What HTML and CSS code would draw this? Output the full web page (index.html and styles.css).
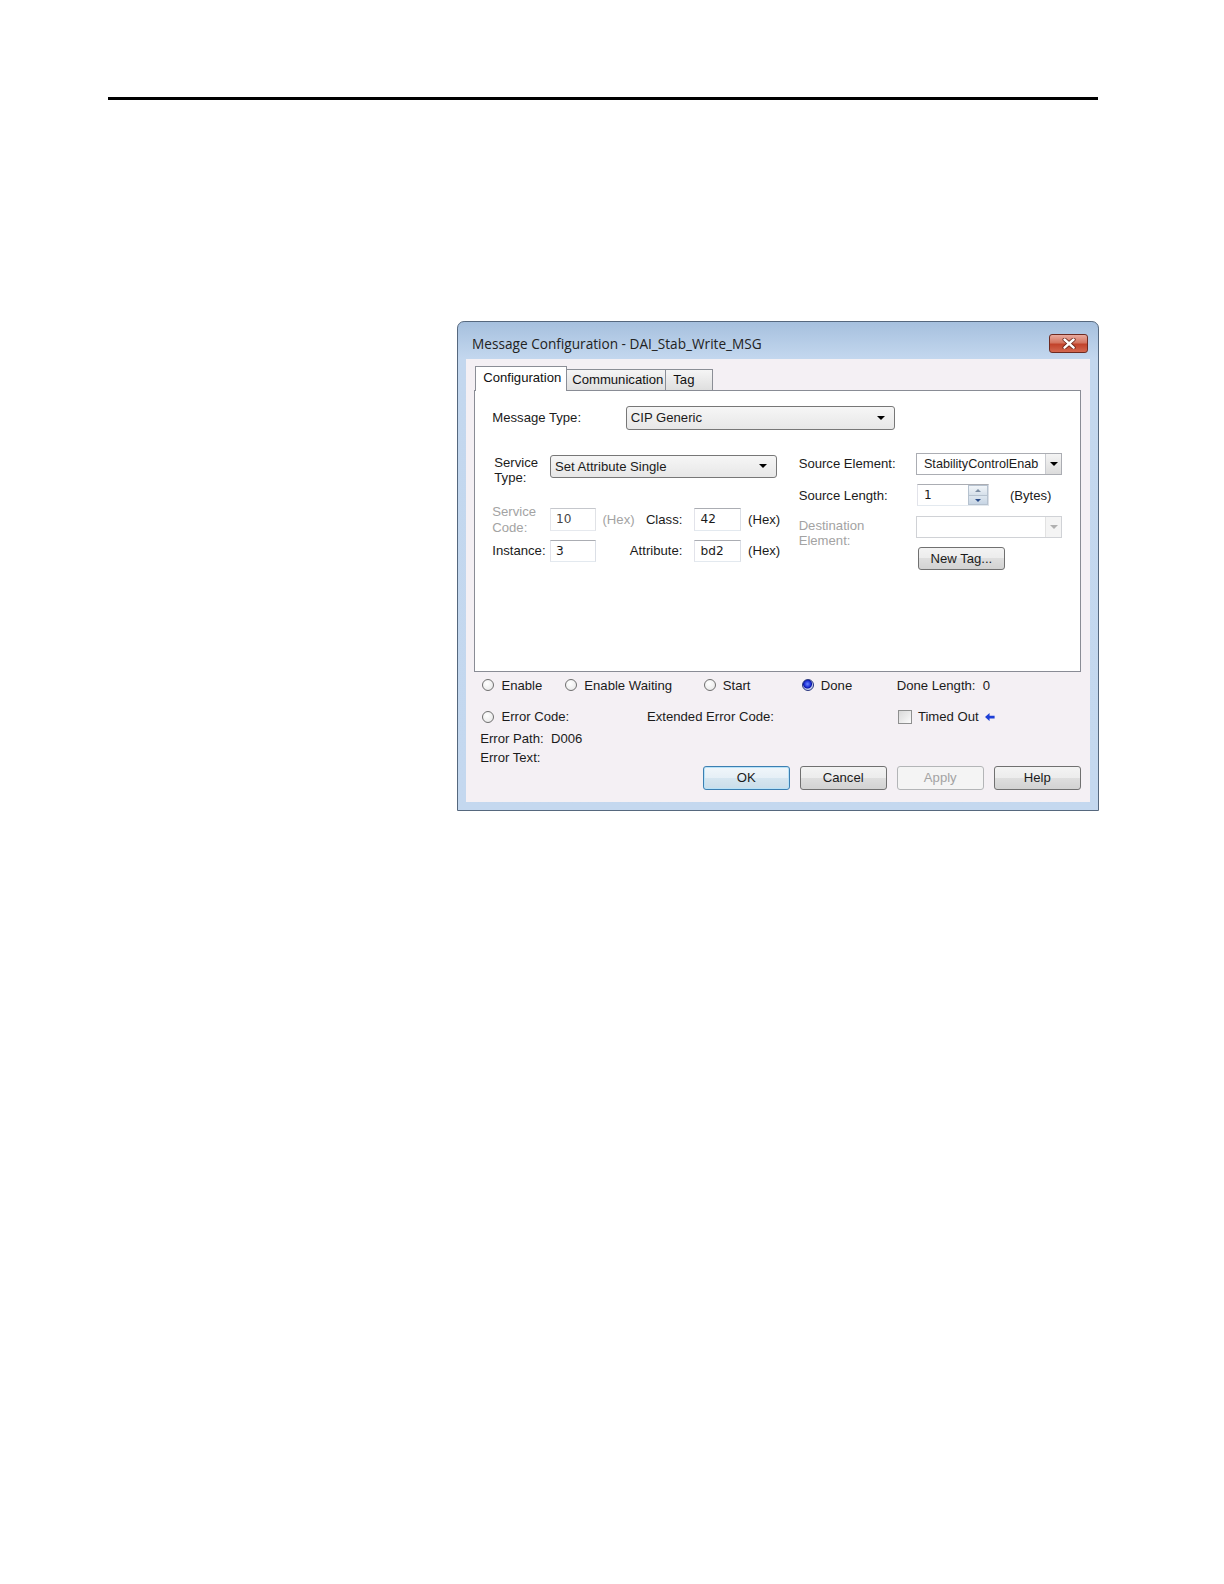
FILE: index.html
```html
<!DOCTYPE html>
<html lang="en">
  <head>
    <meta charset="UTF-8" />
    <title>Message Configuration - DAI_Stab_Write_MSG</title>
    <link rel="stylesheet" href="styles.css">
  </head>
  <body>
    <div class="page">
      <hr class="rule">

      <div class="dialog">
        <div class="titlebar">
          <span class="title">Message Configuration - DAI_Stab_Write_MSG</span>
          <span class="close">
            <svg width="14" height="11" viewBox="0 0 14 11">
              <path d="M2.5 1.5 L11.5 9.5 M11.5 1.5 L2.5 9.5" stroke="#6b2418" stroke-width="4" stroke-linecap="round" />
              <path d="M2.5 1.5 L11.5 9.5 M11.5 1.5 L2.5 9.5" stroke="#fff" stroke-width="2.4" stroke-linecap="round" />
            </svg>
          </span>
        </div>

        <div class="client">
          <div class="tabs">
            <span class="tab tab-config active">Configuration</span>
            <span class="tab tab-comm">Communication</span>
            <span class="tab tab-tag">Tag</span>
          </div>

          <div class="panel">
            <div class="msg-row">
              <span class="msg-label">Message Type:</span>
              <div class="combo msg-combo"><span>CIP Generic</span><i class="arrow"></i></div>
            </div>

            <div class="cols">
              <div class="left">
                <div class="svc-row">
                  <span class="svc-label">Service<br>Type:</span>
                  <div class="combo svc-combo"><span>Set Attribute Single</span><i class="arrow"></i></div>
                </div>

                <div class="codes">
                  <span class="two-line gray">Service<br>Code:</span>
                  <div class="field disabled">10</div>
                  <div class="mid"><span class="gray">(Hex)</span><span>Class:</span></div>
                  <div class="field">42</div>
                  <span class="hex">(Hex)</span>

                  <span>Instance:</span>
                  <div class="field">3</div>
                  <div class="mid"><span></span><span>Attribute:</span></div>
                  <div class="field">bd2</div>
                  <span class="hex">(Hex)</span>
                </div>
              </div>

              <div class="right">
                <span>Source Element:</span>
                <div class="ecombo">
                  <span class="ecombo-text">StabilityControlEnab</span>
                  <span class="ecombo-btn"><i class="arrow"></i></span>
                </div>

                <span>Source Length:</span>
                <div class="len">
                  <div class="spin">
                    <span class="spin-text">1</span>
                    <span class="spin-btns">
                      <span class="spin-up"><i class="tri-up"></i></span>
                      <span class="spin-down"><i class="tri-down"></i></span>
                    </span>
                  </div>
                  <span class="bytes">(Bytes)</span>
                </div>

                <span class="two-line gray dest-label">Destination<br>Element:</span>
                <div class="ecombo off">
                  <span class="ecombo-text"></span>
                  <span class="ecombo-btn"><i class="arrow"></i></span>
                </div>

                <span></span>
                <div class="btn newtag">New Tag...</div>
              </div>
            </div>
          </div>

          <div class="status">
            <div class="srow">
              <span class="item w-enable"><i class="radio"></i>Enable</span>
              <span class="item w-waiting"><i class="radio"></i>Enable Waiting</span>
              <span class="item w-start"><i class="radio"></i>Start</span>
              <span class="item w-done"><i class="radio on"></i>Done</span>
              <span class="item">Done Length:&nbsp; 0</span>
            </div>
            <div class="srow srow-2">
              <span class="item w-error"><i class="radio"></i>Error Code:</span>
              <span class="item w-ext">Extended Error Code:</span>
              <span class="item timed"><i class="check"></i>Timed Out
                <svg class="back" width="10" height="8" viewBox="0 0 10 8">
                  <path d="M0 4 L4.5 0 L4.5 2.6 L9.5 2.6 L9.5 5.4 L4.5 5.4 L4.5 8 Z" fill="#1d3fd6" />
                </svg>
              </span>
            </div>
            <div class="eline eline-first">Error Path:&nbsp; D006</div>
            <div class="eline">Error Text:</div>
          </div>

          <div class="buttons">
            <div class="btn default">OK</div>
            <div class="btn">Cancel</div>
            <div class="btn disabled">Apply</div>
            <div class="btn">Help</div>
          </div>
        </div>
      </div>
    </div>
  </body>
</html>
```

FILE: styles.css
```css
html,
body {
  overflow: hidden;
}

body {
  margin: 0;
  background: #fff;
  font-family: "Liberation Sans", Arial, sans-serif;
  font-size: 13px;
  color: #1b1b1b;
}

.page {
  zoom: 1.011;
  width: 1224px;
  height: 1584px;
  padding-top: 96px;
  box-sizing: border-box;
}

.rule {
  margin: 0 0 0 107px;
  width: 979px;
  height: 3px;
  border: 0;
  background: #000;
}

/* window frame */
.dialog {
  box-sizing: border-box;
  width: 635px;
  margin: 219px 0 0 452px;
  padding: 0 8px 8px;
  border: 1px solid #56687e;
  border-radius: 7px 7px 0 0;
  background: linear-gradient(to bottom, #a6c0de 0, #c3d7ee 36px, #c4d8ef 100%);
}

.titlebar {
  box-sizing: border-box;
  height: 36px;
  padding: 6px 0 0 6px;
  display: flex;
  align-items: center;
  justify-content: space-between;
}

.title {
  font-family: "Open Sans", "Noto Sans", sans-serif;
  font-size: 13.5px;
  color: #222;
}

.close {
  box-sizing: border-box;
  width: 38px;
  height: 19px;
  margin-right: 2px;
  display: flex;
  align-items: center;
  justify-content: center;
  border: 1px solid #6e2a20;
  border-radius: 3px;
  background: linear-gradient(to bottom, #e9aa9e 0, #d47560 45%, #c2432b 55%, #d3674f 100%);
}

.client {
  padding: 7px 9px 11px 8px;
  background: #f4f0f4;
}

/* tabs */
.tabs {
  display: flex;
  align-items: flex-end;
  height: 24px;
  padding-left: 1px;
}

.tab {
  box-sizing: border-box;
  height: 21px;
  line-height: 20px;
  border: 1px solid #8b8e96;
  border-bottom: 0;
  background: linear-gradient(to bottom, #f5f5f5, #dfdfdf);
  color: #111;
}

.tab-config { width: 91px; padding-left: 7px; }
.tab-comm { width: 99px; padding-left: 5px; margin-left: -1px; }
.tab-tag { width: 47px; padding-left: 7px; margin-left: -1px; }

.tab.active {
  position: relative;
  z-index: 1;
  height: 25px;
  line-height: 22px;
  margin-bottom: -1px;
  background: #fff;
}

.panel {
  box-sizing: border-box;
  height: 279px;
  padding: 15px 0 0 17px;
  border: 1px solid #898c95;
  background: #fff;
}

.gray {
  color: #a3a3a3;
}

/* combo boxes */
.combo {
  box-sizing: border-box;
  height: 23px;
  padding: 0 9px 0 4px;
  display: flex;
  align-items: center;
  justify-content: space-between;
  border: 1px solid #777;
  border-radius: 3px;
  background: linear-gradient(to bottom, #f6f6f6, #e7e7e7);
}

.arrow {
  width: 0;
  height: 0;
  border-top: 4px solid #000;
  border-left: 4px solid transparent;
  border-right: 4px solid transparent;
}

.msg-row {
  display: flex;
  align-items: center;
}

.msg-label {
  width: 132px;
}

.msg-combo {
  width: 266px;
}

.cols {
  display: flex;
  margin-top: 23px;
}

.left {
  flex: 0 0 303px;
  padding-top: 2px;
}

.svc-row {
  display: flex;
  align-items: flex-start;
}

.svc-label {
  box-sizing: border-box;
  width: 57px;
  padding-left: 2px;
  line-height: 15px;
}

.svc-combo {
  width: 225px;
}

.codes {
  display: grid;
  grid-template-columns: 57px 46px 97px 46px auto;
  row-gap: 5px;
  align-items: center;
  margin-top: 19px;
}

.two-line {
  line-height: 15px;
}

.mid {
  display: flex;
  justify-content: space-between;
  padding: 0 12px 0 6px;
}

.hex {
  padding-left: 7px;
}

/* text boxes */
.field {
  box-sizing: border-box;
  height: 22px;
  padding-left: 5px;
  line-height: 21px;
  border: 1px solid;
  border-color: #abadb3 #dbdfe6 #e3e9ef #e2e3ea;
  background: #fff;
  font-family: "DejaVu Sans", sans-serif;
  font-size: 12px;
}

.field.disabled {
  border-color: #c5c7cc #e0e2e6 #e6e9ee #e4e5ea;
  color: #444;
}

.right {
  flex: 1;
  min-width: 0;
  display: grid;
  grid-template-columns: 116px 145px;
  grid-template-rows: 22px 22px 22px 23px;
  row-gap: 9px;
  align-items: center;
}

.dest-label {
  align-self: start;
  padding-top: 2px;
}

.ecombo {
  box-sizing: border-box;
  height: 22px;
  display: flex;
  border: 1px solid #abadb3;
  background: #fff;
}

.ecombo-text {
  flex: 1;
  padding-left: 7px;
  line-height: 20px;
  font-size: 12.5px;
}

.ecombo-btn {
  width: 15px;
  display: flex;
  align-items: center;
  justify-content: center;
  border-left: 1px solid #c9cbd0;
  background: linear-gradient(to bottom, #f4f4f4, #dcdcdc);
}

.ecombo.off {
  border-color: #d0d2d6;
}

.ecombo.off .ecombo-btn {
  background: #f4f4f4;
  border-left-color: #e2e2e2;
}

.ecombo.off .arrow {
  border-top-color: #b0b0b0;
}

.len {
  display: flex;
  align-items: center;
  white-space: nowrap;
}

.spin {
  box-sizing: border-box;
  flex: 0 0 71px;
  height: 22px;
  margin-left: 1px;
  display: flex;
  border: 1px solid;
  border-color: #abadb3 #dbdfe6 #e3e9ef #e2e3ea;
  background: #fff;
}

.spin-text {
  flex: 1;
  padding-left: 6px;
  line-height: 21px;
  font-family: "DejaVu Sans", sans-serif;
  font-size: 12px;
}

.spin-btns {
  width: 19px;
  display: flex;
  flex-direction: column;
}

.spin-up,
.spin-down {
  flex: 1;
  display: flex;
  align-items: center;
  justify-content: center;
  border: 1px solid #b6c2cf;
  background: linear-gradient(to bottom, #f1f5f9, #d6e0ea);
}

.spin-down {
  border-top: 0;
  background: linear-gradient(to bottom, #dde6ef, #c7d5e4);
}

.tri-up {
  border-bottom: 3px solid #7d8ea3;
  border-left: 3px solid transparent;
  border-right: 3px solid transparent;
}

.tri-down {
  border-top: 3px solid #2a4d8a;
  border-left: 3px solid transparent;
  border-right: 3px solid transparent;
}

.bytes {
  padding-left: 21px;
}

/* buttons */
.btn {
  box-sizing: border-box;
  width: 86px;
  height: 24px;
  line-height: 22px;
  text-align: center;
  border: 1px solid #707070;
  border-radius: 3px;
  background: linear-gradient(to bottom, #f3f3f3 0, #ececec 50%, #dedede 50%, #d2d2d2 100%);
}

.newtag {
  height: 23px;
  margin-left: 2px;
  line-height: 21px;
}

.btn.default {
  border-color: #3c7fb1;
  box-shadow: inset 0 0 0 1px #b8e2f8;
  background: linear-gradient(to bottom, #f0f6fa 0, #e5eff6 50%, #d6e6f0 50%, #cadde9 100%);
}

.btn.disabled {
  color: #a3a3a3;
  border-color: #b3b5b7;
  background: #f4f4f4;
}

/* status area */
.status {
  margin-top: 4px;
}

.srow {
  display: flex;
  align-items: center;
  height: 18px;
  padding-left: 8px;
}

.srow-2 {
  margin-top: 13px;
}

.item {
  display: flex;
  align-items: center;
  gap: 7px;
}

.w-enable { width: 82px; }
.w-waiting { width: 137px; }
.w-start { width: 97px; }
.w-done { width: 94px; }
.w-error { width: 163px; }
.w-ext { width: 248px; }

.radio {
  box-sizing: border-box;
  width: 12px;
  height: 12px;
  border-radius: 50%;
  border: 1px solid #6f6f6f;
  background: radial-gradient(circle at 40% 35%, #fff 0, #ececec 70%, #d6d6d6 100%);
}

.radio.on {
  border-color: #26347e;
  background: radial-gradient(circle at 45% 40%, #6b86ff 0, #1f32d8 3px, #0d1aa8 4px, #c8d0ee 5px);
}

.timed {
  gap: 5px;
}

.check {
  box-sizing: border-box;
  width: 14px;
  height: 14px;
  margin-right: 1px;
  border: 1px solid #8e8f8f;
  background: linear-gradient(135deg, #d9d9d9, #fbfbfb);
}

.back {
  margin-left: 1px;
}

.eline {
  padding-left: 6px;
  line-height: 19px;
}

.eline-first {
  margin-top: 3px;
}

.buttons {
  display: flex;
  justify-content: flex-end;
  gap: 10px;
  margin-top: -1px;
}
```
